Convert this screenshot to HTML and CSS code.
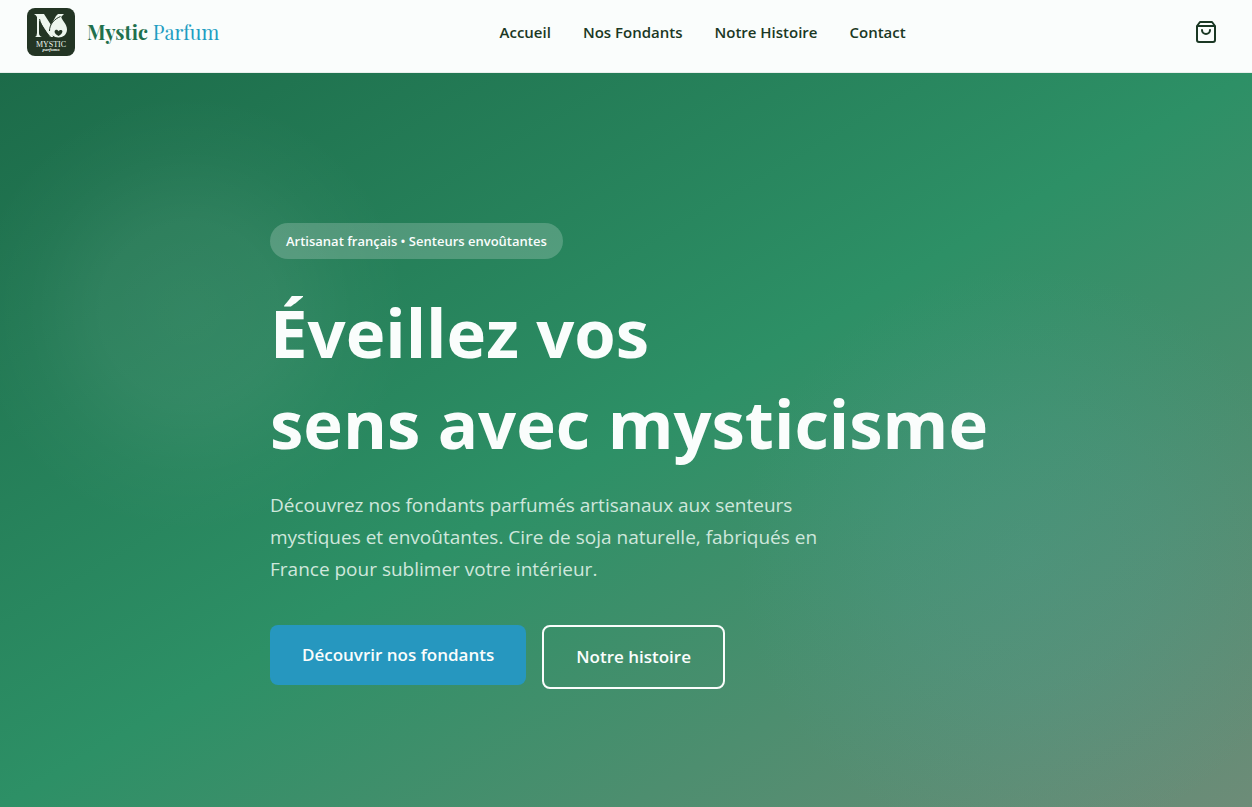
FILE: index.html
```html
<!DOCTYPE html>
<html lang="fr">
<head>
<meta charset="utf-8">
<meta name="viewport" content="width=device-width, initial-scale=1">
<title>Mystic Parfum</title>
<link rel="stylesheet" href="styles.css">
</head>
<body>
<header class="header">
  <a class="brand" href="#">
    <svg class="brand-logo" viewBox="0 0 48 48" aria-hidden="true">
      <rect width="48" height="48" rx="8" fill="#233524"/>
      <g fill="#edf6ee">
        <path d="M7 6h10l7 11 5-9 2-2h6l-3 3c-6 4-9 9-9 15l1 5h-3L12 12v13q0 3 3 4H8q2-1 2-4V9Q9 7 7 6z"/>
        <path d="M34 8c-7 3-11 8-11 13.500 0 5 4 8 8.500 8s8.500-3 8.500-8c0-6-5-8-6-13.500z"/>
      </g>
      <path d="M12.500 11c2 8 6 13 11 18M22.500 23c0-7 5-12 11-14.500" fill="none" stroke="#233524"/>
      <path d="M31.500 28c-4.500-2.500-4.500-5-3-6 1.500-.5 2.500.3 3 1.300.5-1 2-1.800 3.300-1 1.500 1 .2 4-3.300 5.700z" fill="#233524"/>
      <text class="logo-name" x="24" y="39" text-anchor="middle">MYSTIC</text>
      <text class="logo-sub" x="24" y="43" text-anchor="middle">parfums</text>
    </svg>
    <span class="brand-name"><strong>Mystic</strong> <span class="brand-accent">Parfum</span></span>
  </a>
  <nav class="nav" aria-label="Navigation principale">
    <a href="#">Accueil</a>
    <a href="#">Nos Fondants</a>
    <a href="#">Notre Histoire</a>
    <a href="#">Contact</a>
  </nav>
  <button class="cart" type="button" aria-label="Panier">
    <svg viewBox="0 0 24 24" aria-hidden="true"><path d="M6 2 3 6v14a2 2 0 0 0 2 2h14a2 2 0 0 0 2-2V6l-3-4zM3 6h18M16 10a4 4 0 0 1-8 0"/></svg>
  </button>
</header>
<main class="hero">
  <div class="hero-content">
    <p class="badge">Artisanat français • Senteurs envoûtantes</p>
    <h1 class="title">Éveillez vos<br>sens avec mysticisme</h1>
    <p class="lead">Découvrez nos fondants parfumés artisanaux aux senteurs mystiques et envoûtantes. Cire de soja naturelle, fabriqués en France pour sublimer votre intérieur.</p>
    <div class="actions">
      <a class="button button-primary" href="#">Découvrir nos fondants</a>
      <a class="button button-outline" href="#">Notre histoire</a>
    </div>
  </div>
</main>
</body>
</html>
```
FILE: styles.css
```css
* { box-sizing: border-box; }

body {
  margin: 0;
  min-height: 100vh;
  display: flex;
  flex-direction: column;
  color: #1a3824;
  background: #fafdfc;
  font-family: "Open Sans", "Noto Sans", sans-serif;
}

a { color: inherit; text-decoration: none; }

.header {
  display: flex;
  justify-content: space-between;
  align-items: center;
  padding: 8px 26px 16px 27px;
  border-bottom: 1px solid #e8efec;
}

.brand { display: flex; align-items: center; gap: 12px; }
.brand-logo { width: 48px; height: 48px; }
.logo-name { font: 8px "Liberation Serif", serif; fill: #edf6ee; }
.logo-sub { font: italic bold 5px "Liberation Serif", serif; fill: #edf6ee; }
.brand-name {
  font-family: "Playfair Display", "Liberation Serif", serif;
  font-size: 20px;
  line-height: 32px;
  color: #1f704d;
}
.brand-accent { color: #1f9dc2; }

.nav { display: flex; gap: 32px; font-size: 15px; font-weight: 600; line-height: 24px; }

.cart {
  display: flex;
  padding: 8px;
  border: 0;
  color: inherit;
  background: none;
}
.cart svg {
  width: 24px;
  height: 24px;
  fill: none;
  stroke: currentColor;
  stroke-width: 2;
  stroke-linecap: round;
  stroke-linejoin: round;
}

.hero {
  flex: 1;
  padding: 150px 24px 116px;
  background:
    radial-gradient(circle at 190px 240px, rgba(255, 255, 255, 0.07), rgba(255, 255, 255, 0.06) 90px, rgba(255, 255, 255, 0.02) 160px, rgba(255, 255, 255, 0) 220px),
    radial-gradient(circle at 82% 66%, rgba(80, 165, 165, 0.2), rgba(80, 165, 165, 0.15) 130px, rgba(80, 165, 165, 0) 290px),
    linear-gradient(to bottom right, #1c6b49, #2d9066 50%, #6d8c78);
}

.hero-content { max-width: 712px; margin: 0 auto; color: #fafdfc; }

.badge {
  width: fit-content;
  margin: 0 0 28px;
  padding: 8px 16px;
  border-radius: 18px;
  background: rgba(255, 255, 255, 0.2);
  font-size: 13px;
  font-weight: 600;
  line-height: 20px;
}

.title { margin: 0 0 20px; font-size: 67px; font-weight: 700; line-height: 91px; white-space: nowrap; }

.lead { max-width: 576px; margin: 0 0 40px; color: #cfe7dc; font-size: 19px; line-height: 32px; }

.actions { display: flex; flex-wrap: wrap; align-items: flex-start; gap: 16px; }
.button {
  padding: 16px 32px;
  border-radius: 8px;
  font-size: 17px;
  font-weight: 600;
  line-height: 28px;
}
.button-primary { background: #2697bf; }
.button-outline { border: 2px solid #fafdfc; }
```
